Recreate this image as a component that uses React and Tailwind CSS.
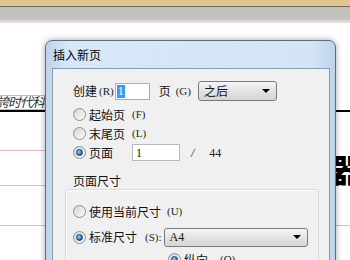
import React from 'react';

const cjk = "font-['Noto_Sans_CJK_SC',sans-serif]";
const latin = "font-['Liberation_Serif','Noto_Sans_CJK_SC',serif]";

const Radio = ({ checked }) => (
  <span className="flex h-[13px] w-[13px] shrink-0 items-center justify-center rounded-full border border-[#8f8f8f] bg-[linear-gradient(135deg,#d4d4d4,#fdfdfd)]">
    {checked && (
      <span className="h-[7px] w-[7px] rounded-full border border-[#17406b] bg-[radial-gradient(circle_at_35%_35%,#9ad8ff,#2a79c0_60%,#0f3f73)]" />
    )}
  </span>
);

const Key = ({ children, className = '' }) => (
  <span className={`${latin} text-[11px] text-[#222] ${className}`}>{children}</span>
);

const Combo = ({ value, className = '' }) => (
  <div
    className={`flex items-center justify-between rounded-[3px] border border-[#7a7a7a] bg-[linear-gradient(#f6f6f6,#e3e3e3_50%,#d6d6d6)] pl-[5px] pr-[6px] ${className}`}
  >
    <span className="text-[12px] leading-none text-[#111]">{value}</span>
    <span className="h-0 w-0 border-x-[4px] border-t-[4px] border-x-transparent border-t-black" />
  </div>
);

const Option = ({ checked, label, k, gap = 'ml-[7px]', children }) => (
  <div className="flex h-[19px] items-center">
    <Radio checked={checked} />
    <span className="ml-[3px] text-[12px] leading-none text-[#111]">{label}</span>
    {k && <Key className={gap}>{k}</Key>}
    {children}
  </div>
);

export default function App() {
  return (
    <div className={`relative h-[260px] w-[350px] overflow-hidden bg-white ${cjk}`}>
      {/* document behind the dialog */}
      <div className="h-[6px] bg-[#e2c690]" />
      <div className="h-px bg-[#6e6868]" />
      <div className="h-[13px] bg-[#c3c3bd]" />
      <div className="h-[3px] bg-[linear-gradient(#d8cfd2,#f1dbe2)]" />

      <div className="mt-[72px] flex h-[15px] w-[48px] items-end overflow-hidden border-y border-r border-[#e7a9cb] pb-px">
        <span className="ml-[-4px] whitespace-nowrap text-[13px] italic leading-none tracking-[-1px] text-[#333]">
          誇时代科技
        </span>
      </div>
      <div className="h-[2px] bg-black" />

      <div className="mt-[38px] flex h-px">
        <div className="w-[50px] bg-[#e4b7d2]" />
      </div>
      <div className="mt-[14px] flex h-px justify-end">
        <div className="w-[14px] bg-[#e4b7d2]" />
      </div>
      <div className="mt-[19px] flex h-px">
        <div className="w-[50px] bg-[#e4b7d2]" />
      </div>
      <div className="mt-[39px] h-px bg-[#e4b7d2]" />

      <span className="absolute left-[331px] top-[152px] whitespace-nowrap text-[32px] font-black leading-none text-black">
        器们
      </span>

      {/* dialog window */}
      <div className="absolute left-[45px] top-[40px] flex h-[240px] w-[291px] flex-col rounded-t-[7px] border border-[#5d6e84] bg-[linear-gradient(90deg,#bfd3ea,#d9e8f8_8%,#d4e4f6_92%,#bfd3ea)] shadow-[0_0_6px_rgba(0,0,0,0.35)]">
        <div className="flex h-[27px] items-center pl-[7px] text-[12px] text-black">插入新页</div>
        <div className="ml-[6px] mr-[5px] flex-1 border border-[#8a99ad] bg-[#f0f0f0]">
          <div className="mt-[12px] flex h-[20px] items-center pl-[20px]">
            <span className="text-[12px] leading-none text-[#111]">创建</span>
            <Key className="ml-[2px]">(R)</Key>
            <div className="ml-[1px] flex h-[17px] w-[35px] items-center border border-[#a9adb5] bg-white pl-[1px]">
              <span className={`${latin} bg-[#3399ff] px-[1px] text-[12px] leading-[13px] text-white`}>1</span>
            </div>
            <span className="ml-[9px] text-[12px] leading-none text-[#111]">页</span>
            <Key className="ml-[5px]">(G)</Key>
            <Combo value="之后" className="ml-[7px] h-[20px] w-[79px]" />
          </div>

          <div className="mt-[4px] flex flex-col pl-[20px]">
            <Option label="起始页" k="(F)" />
            <Option label="末尾页" k="(L)" />
            <Option checked label="页面">
              <div className="ml-[19px] flex h-[17px] w-[48px] items-center border border-[#b5b9c0] bg-white pl-[3px]">
                <span className={`${latin} text-[12px] leading-none text-[#111]`}>1</span>
              </div>
              <span className={`${latin} ml-[11px] text-[12px] italic text-[#222]`}>/</span>
              <span className={`${latin} ml-[15px] text-[12px] text-[#222]`}>44</span>
            </Option>
          </div>

          <div className="ml-[20px] mt-[13px] text-[12px] leading-none text-[#111]">页面尺寸</div>
          <div className="ml-[12px] mr-[10px] mt-[2px] h-[80px] rounded-[3px] border border-[#d5dbe2] pl-[7px] shadow-[inset_1px_1px_0_#fff]">
            <div className="mt-[12px]">
              <Option label="使用当前尺寸" k="(U)" gap="ml-[6px]" />
            </div>
            <div className="mt-[6px] flex h-[20px] items-center">
              <Radio checked />
              <span className="ml-[3px] text-[12px] leading-none text-[#111]">标准尺寸</span>
              <Key className="ml-[8px]">(S):</Key>
              <Combo value="A4" className={`ml-[2px] h-[19px] w-[144px] ${latin}`} />
            </div>
            <div className="ml-[95px] mt-[3px] flex h-[19px] items-center">
              <Radio checked />
              <span className="ml-[3px] text-[12px] leading-none text-[#111]">纵向</span>
              <Key className="ml-[12px]">(O)</Key>
            </div>
          </div>
        </div>
      </div>
    </div>
  );
}
